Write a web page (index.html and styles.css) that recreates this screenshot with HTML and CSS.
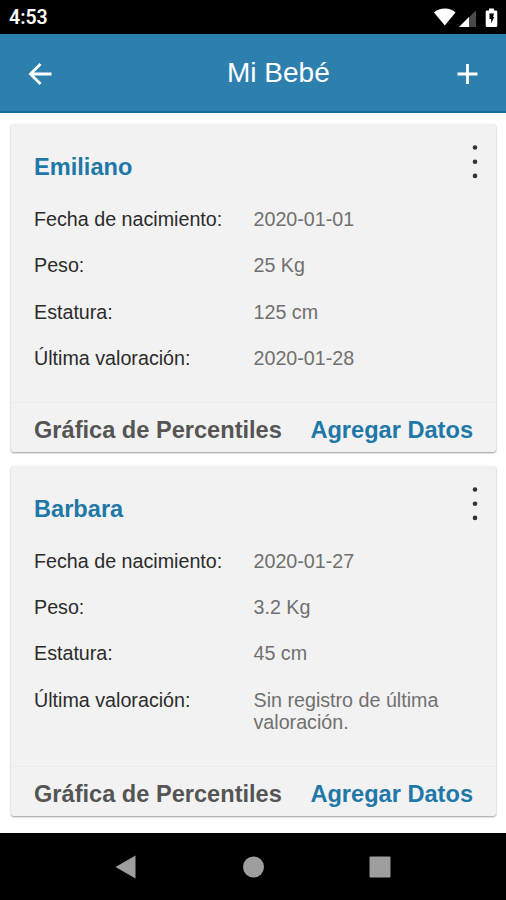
FILE: index.html
```html
<!DOCTYPE html>
<html lang="es">
<head>
  <meta charset="UTF-8">
  <meta name="viewport" content="width=device-width, initial-scale=1.0">
  <title>Mi Bebé</title>
  <link rel="stylesheet" href="styles.css">
</head>
<body>
  <div class="app">
    <!-- Status bar -->
    <div class="status-bar">
      <span class="clock">4:53</span>
      <svg class="status-icons" width="66" height="20" viewBox="0 0 66 20">
        <path fill="#fff" d="M1 4.500 C6.500 -1 17.500 -1 22.500 4.500 L11.800 17.500 Z"/>
        <path fill="#4a4a4a" d="M43 2.500 V19 H26 Z"/>
        <path fill="#fff" d="M36 9 V19 H26 Z"/>
        <path fill="#fff" d="M56 0.500 h5 v2 h2 a1.300 1.300 0 0 1 1.300 1.300 v14 a1.300 1.300 0 0 1 -1.300 1.300 h-9 a1.300 1.300 0 0 1 -1.300 -1.300 v-14 a1.300 1.300 0 0 1 1.300 -1.300 h2 z"/>
        <path fill="#000" d="M56.500 5.500 h4.500 l-1 3.500 h1.200 l-3 6.500 v-4.500 h-1.700 z"/>
      </svg>
    </div>

    <!-- Header -->
    <div class="header">
      <svg class="icon" width="26" height="26" viewBox="0 0 26 26">
        <path d="M25.500 13 H4.500 M14.500 3 L4.500 13 L14.500 23"/>
      </svg>
      <h1>Mi Bebé</h1>
      <svg class="icon" width="26" height="26" viewBox="0 0 26 26">
        <path d="M13.500 3 V23 M3.500 13 H23.500"/>
      </svg>
    </div>

    <!-- Babies -->
    <div class="cards">
      <div class="card">
        <div class="card-body">
          <div class="card-title">
            <h2>Emiliano</h2>
            <svg class="menu" width="8" height="36" viewBox="0 0 8 36">
              <circle cx="4" cy="3.500" r="2.3"/>
              <circle cx="4" cy="17.700" r="2.3"/>
              <circle cx="4" cy="31.900" r="2.3"/>
            </svg>
          </div>
          <div class="data">
            <span class="label">Fecha de nacimiento:</span>
            <span class="value">2020-01-01</span>
            <span class="label">Peso:</span>
            <span class="value">25 Kg</span>
            <span class="label">Estatura:</span>
            <span class="value">125 cm</span>
            <span class="label">Última valoración:</span>
            <span class="value">2020-01-28</span>
          </div>
        </div>
        <div class="actions">
          <span class="action">Gráfica de Percentiles</span>
          <span class="action primary">Agregar Datos</span>
        </div>
      </div>

      <div class="card">
        <div class="card-body">
          <div class="card-title">
            <h2>Barbara</h2>
            <svg class="menu" width="8" height="36" viewBox="0 0 8 36">
              <circle cx="4" cy="3.500" r="2.3"/>
              <circle cx="4" cy="17.700" r="2.3"/>
              <circle cx="4" cy="31.900" r="2.3"/>
            </svg>
          </div>
          <div class="data">
            <span class="label">Fecha de nacimiento:</span>
            <span class="value">2020-01-27</span>
            <span class="label">Peso:</span>
            <span class="value">3.2 Kg</span>
            <span class="label">Estatura:</span>
            <span class="value">45 cm</span>
            <span class="label">Última valoración:</span>
            <span class="value">Sin registro de última valoración.</span>
          </div>
        </div>
        <div class="actions">
          <span class="action">Gráfica de Percentiles</span>
          <span class="action primary">Agregar Datos</span>
        </div>
      </div>
    </div>

    <!-- Android navigation -->
    <div class="nav-bar">
      <svg width="24" height="24" viewBox="0 0 24 24"><path d="M1.500 12 L21.500 0.500 V23.500 Z"/></svg>
      <svg width="24" height="24" viewBox="0 0 24 24"><circle cx="12.500" cy="12" r="10.500"/></svg>
      <svg width="24" height="24" viewBox="0 0 24 24"><rect x="1.500" y="1.500" width="21" height="21" rx="1"/></svg>
    </div>
  </div>
</body>
</html>
```

FILE: styles.css
```css
* {
  box-sizing: border-box;
}
body {
  margin: 0;
  font-family: "Liberation Sans", Arial, sans-serif;
  background-color: #fff;
}
h1,
h2 {
  margin: 0;
}
.app {
  display: flex;
  flex-direction: column;
  width: 506px;
  height: 900px;
}
.status-bar {
  display: flex;
  align-items: center;
  justify-content: space-between;
  height: 34px;
  padding: 1px 7px 0 9px;
  background-color: #000;
}
.clock {
  color: #fff;
  font-family: Roboto, sans-serif;
  font-size: 19.5px;
  font-weight: 600;
  line-height: 24px;
}
.header {
  display: flex;
  align-items: center;
  justify-content: space-between;
  height: 79px;
  padding: 2px 26px 0;
  background-color: #2d7fae;
  border-bottom: 2px solid #1d6c9b;
}
.header h1 {
  color: #fff;
  font-size: 28px;
  font-weight: normal;
  line-height: 32px;
  margin: -1px auto 0 175px;
}
.icon {
  fill: none;
  stroke: #fff;
  stroke-width: 2.8;
}
.cards {
  flex: 1;
  display: flex;
  flex-direction: column;
  gap: 14px;
  padding: 11px 10px 0 11px;
}
.card {
  background-color: #f2f2f2;
  border-radius: 3px;
  box-shadow: 0 1px 2px rgba(0, 0, 0, 0.4);
}
.card-body {
  padding: 29px 17px 33px 23px;
}
.card-title {
  display: flex;
  justify-content: space-between;
  height: 55px;
}
.card-title h2 {
  color: #1f78a8;
  font-size: 23.6px;
  line-height: 28px;
}
.menu {
  margin-top: -9px;
  fill: #333;
}
.data {
  display: grid;
  grid-template-columns: 219.5px 200px;
  row-gap: 24.3px;
  font-size: 19.7px;
  line-height: 22px;
}
.label {
  color: #2b2b2b;
}
.value {
  color: #707070;
}
.actions {
  display: flex;
  justify-content: space-between;
  height: 50px;
  padding: 13px 23px 0;
  border-top: 1px solid #ebebeb;
}
.action {
  color: #555;
  font-size: 23.6px;
  font-weight: bold;
  line-height: 28px;
}
.action.primary {
  color: #1f78a8;
}
.nav-bar {
  display: flex;
  align-items: center;
  justify-content: center;
  gap: 103px;
  height: 67px;
  background-color: #000;
  fill: #9e9e9e;
}
```
